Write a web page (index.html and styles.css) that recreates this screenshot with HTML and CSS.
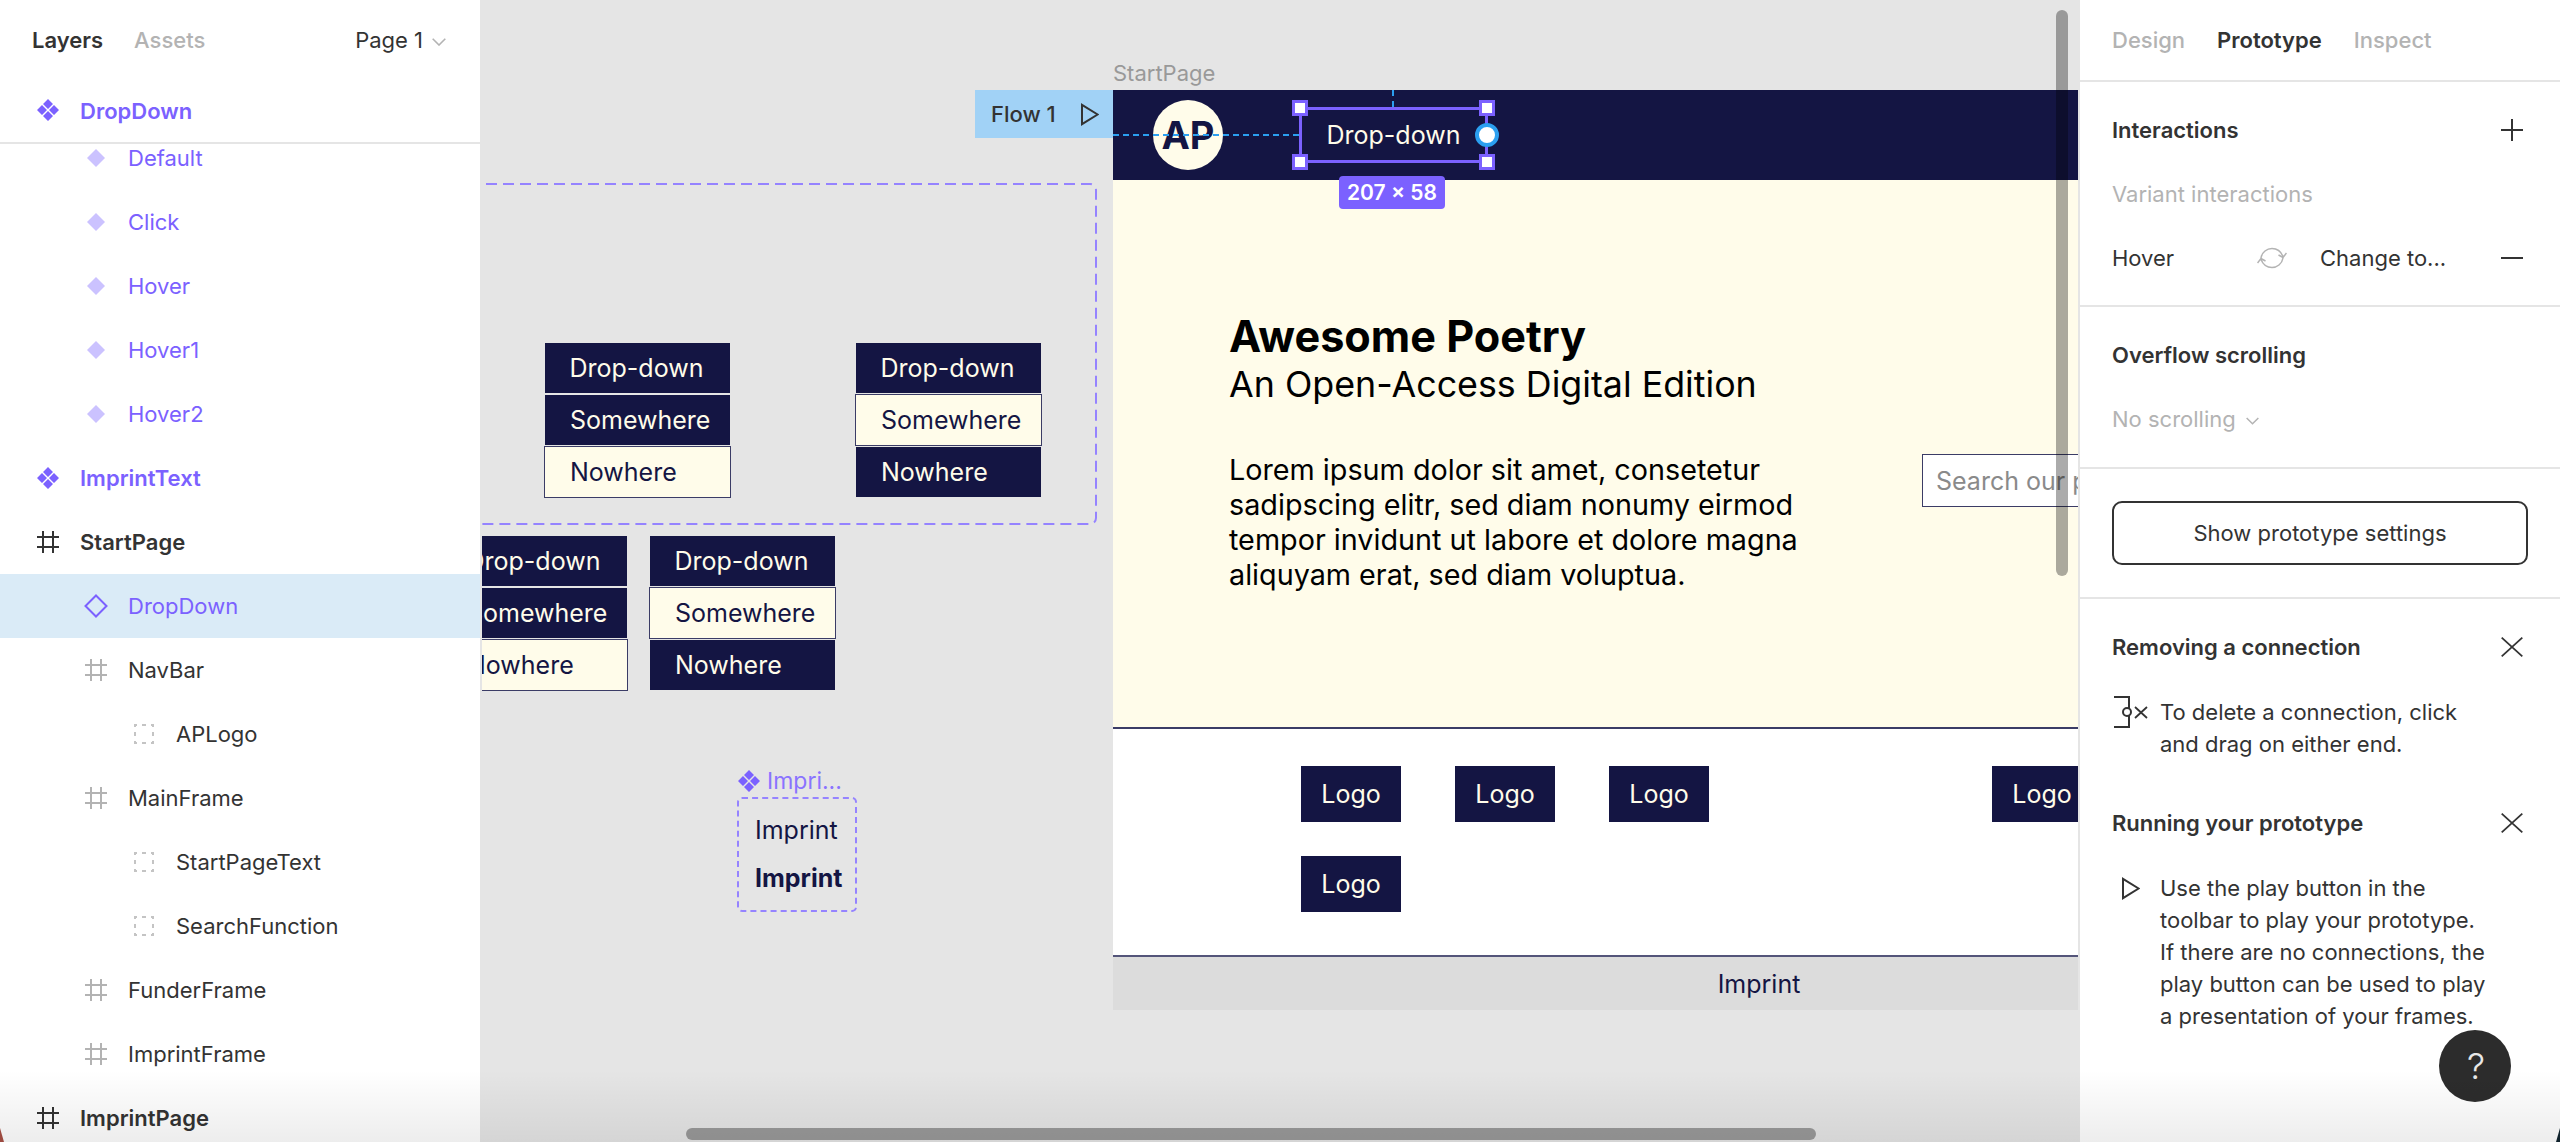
FILE: index.html
```html
<!DOCTYPE html>
<html lang="en">
<head>
<meta charset="utf-8">
<title>Prototype editor</title>
<link rel="stylesheet" href="styles.css">
</head>
<body>
<svg class="defs" width="0" height="0" aria-hidden="true">
  <defs>
    <symbol id="component" viewBox="0 0 22 22"><path d="M11 0l5 5-5 5-5-5zM5 6l5 5-5 5-5-5zM17 6l5 5-5 5-5-5zM11 12l5 5-5 5-5-5z" fill="currentColor"/></symbol>
    <symbol id="variant" viewBox="0 0 18 18"><path d="M9 0l9 9-9 9-9-9z" fill="currentColor"/></symbol>
    <symbol id="instance" viewBox="0 0 24 24"><path d="M12 1.500L22.500 12 12 22.500 1.500 12z" fill="none" stroke="currentColor" stroke-width="2"/></symbol>
    <symbol id="frame" viewBox="0 0 22 22"><path d="M6 0v22M16 0v22M0 6h22M0 16h22" fill="none" stroke="currentColor" stroke-width="2"/></symbol>
    <symbol id="group" viewBox="0 0 20 20"><path d="M0 1h3M8 1h4M17 1h3M0 19h3M8 19h4M17 19h3M1 0v3M1 8v4M1 17v3M19 0v3M19 8v4M19 17v3" fill="none" stroke="currentColor" stroke-width="2"/></symbol>
    <symbol id="chevron" viewBox="0 0 14 8"><path d="M.7.7L7 7l6.300-6.300" fill="none" stroke="currentColor" stroke-width="1.600"/></symbol>
    <symbol id="close" viewBox="0 0 22 20"><path d="M.7.7l20.600 18.600M21.300.7L.7 19.300" fill="none" stroke="currentColor" stroke-width="1.800"/></symbol>
    <symbol id="play" viewBox="0 0 18 23"><path d="M1 1.800L16.600 11.500 1 21.200z" fill="none" stroke="currentColor" stroke-width="2"/></symbol>
  </defs>
</svg>

<div class="app">
  <aside class="layers">
    <div class="tabs">
      <span class="tab tab-on">Layers</span>
      <span class="tab tab-off">Assets</span>
      <span class="page">Page 1<svg class="chev"><use href="#chevron"/></svg></span>
    </div>
    <div class="row pinned lv0 comp"><svg class="ic ic22"><use href="#component"/></svg><span>DropDown</span></div>
    <div class="row lv1 var"><svg class="ic ic18"><use href="#variant"/></svg><span>Default</span></div>
    <div class="row lv1 var"><svg class="ic ic18"><use href="#variant"/></svg><span>Click</span></div>
    <div class="row lv1 var"><svg class="ic ic18"><use href="#variant"/></svg><span>Hover</span></div>
    <div class="row lv1 var"><svg class="ic ic18"><use href="#variant"/></svg><span>Hover1</span></div>
    <div class="row lv1 var"><svg class="ic ic18"><use href="#variant"/></svg><span>Hover2</span></div>
    <div class="row lv0 comp"><svg class="ic ic22"><use href="#component"/></svg><span>ImprintText</span></div>
    <div class="row lv0 strong"><svg class="ic ic22"><use href="#frame"/></svg><span>StartPage</span></div>
    <div class="row lv1 inst"><svg class="ic ic24"><use href="#instance"/></svg><span>DropDown</span></div>
    <div class="row lv1 frm"><svg class="ic ic22"><use href="#frame"/></svg><span>NavBar</span></div>
    <div class="row lv2 grp"><svg class="ic ic20"><use href="#group"/></svg><span>APLogo</span></div>
    <div class="row lv1 frm"><svg class="ic ic22"><use href="#frame"/></svg><span>MainFrame</span></div>
    <div class="row lv2 grp"><svg class="ic ic20"><use href="#group"/></svg><span>StartPageText</span></div>
    <div class="row lv2 grp"><svg class="ic ic20"><use href="#group"/></svg><span>SearchFunction</span></div>
    <div class="row lv1 frm"><svg class="ic ic22"><use href="#frame"/></svg><span>FunderFrame</span></div>
    <div class="row lv1 frm"><svg class="ic ic22"><use href="#frame"/></svg><span>ImprintFrame</span></div>
    <div class="row lv0 strong"><svg class="ic ic22"><use href="#frame"/></svg><span>ImprintPage</span></div>
  </aside>

  <main class="canvas">
    <svg class="set-outline" width="720" height="345"><rect x="1" y="1" width="718" height="340" rx="6" fill="none" stroke="#9583ff" stroke-width="2" stroke-dasharray="11 6"/></svg>

    <div class="dd dd-a">
      <div class="dd-item dd-head">Drop-down</div>
      <div class="dd-item">Somewhere</div>
      <div class="dd-item dd-lit">Nowhere</div>
    </div>
    <div class="dd dd-b">
      <div class="dd-item dd-head">Drop-down</div>
      <div class="dd-item dd-lit">Somewhere</div>
      <div class="dd-item">Nowhere</div>
    </div>
    <div class="dd dd-c">
      <div class="dd-item dd-head">Drop-down</div>
      <div class="dd-item">Somewhere</div>
      <div class="dd-item dd-lit">Nowhere</div>
    </div>
    <div class="dd dd-d">
      <div class="dd-item dd-head">Drop-down</div>
      <div class="dd-item dd-lit">Somewhere</div>
      <div class="dd-item">Nowhere</div>
    </div>

    <div class="imprint-label"><svg class="ic-lab"><use href="#component"/></svg><span>Impri...</span></div>
    <div class="imprint-set">
      <div class="imprint-reg">Imprint</div>
      <div class="imprint-bold">Imprint</div>
    </div>

    <div class="frame-label">StartPage</div>
    <div class="flow"><span>Flow 1</span><svg class="flow-play"><use href="#play"/></svg></div>

    <div class="frame">
      <header class="nav">
        <div class="logo">AP</div>
        <div class="nav-drop">
          Drop-down
          <i class="sel"></i>
          <i class="handle h-tl"></i><i class="handle h-tr"></i><i class="handle h-bl"></i><i class="handle h-br"></i>
          <i class="node"></i>
          <i class="size">207 × 58</i>
        </div>
        <i class="conn-h"></i>
        <i class="conn-v"></i>
      </header>
      <section class="hero">
        <div class="hero-text">
          <h1>Awesome Poetry</h1>
          <h2>An Open-Access Digital Edition</h2>
          <p>Lorem ipsum dolor sit amet, consetetur sadipscing elitr, sed diam nonumy eirmod tempor invidunt ut labore et dolore magna aliquyam erat, sed diam voluptua.</p>
        </div>
        <div class="search">Search our poetry</div>
      </section>
      <section class="funders">
        <div class="logo-row">
          <div class="fund">Logo</div>
          <div class="fund">Logo</div>
          <div class="fund">Logo</div>
          <div class="fund fund-far">Logo</div>
        </div>
        <div class="logo-row">
          <div class="fund">Logo</div>
        </div>
      </section>
      <footer class="foot">Imprint</footer>
    </div>

    <i class="sb-v"></i>
    <i class="sb-h"></i>
  </main>

  <aside class="props">
    <div class="tabs tabs-r">
      <span class="tab tab-off">Design</span>
      <span class="tab tab-on">Prototype</span>
      <span class="tab tab-off">Inspect</span>
    </div>
    <section class="sec sec-int">
      <div class="title-row"><span class="title">Interactions</span>
        <svg class="pm" viewBox="0 0 22 22"><path d="M11 0v22M0 11h22" fill="none" stroke="currentColor" stroke-width="2"/></svg></div>
      <div class="line muted">Variant interactions</div>
      <div class="line hover-row">
        <span class="hv">Hover</span>
        <svg class="sync" viewBox="0 0 30 22"><path d="M4 11C5 5 10 1.500 15 1.500c5 0 9 3 11 8M29.500 6l-3.500 4.500L21.500 8M26 11c-1 6-6 9.500-11 9.500-5 0-9-3-11-8M.5 16l3.500-4.500L8.500 14" fill="none" stroke="currentColor" stroke-width="1.500"/></svg>
        <span class="ch">Change to...</span>
        <svg class="pm" viewBox="0 0 22 22"><path d="M0 11h22" fill="none" stroke="currentColor" stroke-width="2"/></svg>
      </div>
    </section>
    <section class="sec sec-ovf">
      <div class="title-row"><span class="title">Overflow scrolling</span></div>
      <div class="line muted">No scrolling<svg class="chev chev-s"><use href="#chevron"/></svg></div>
    </section>
    <section class="sec sec-btn">
      <div class="btn">Show prototype settings</div>
    </section>
    <section class="tips">
      <div class="title-row"><span class="title">Removing a connection</span><svg class="x"><use href="#close"/></svg></div>
      <div class="tip">
        <svg class="tip-ic conn" viewBox="0 0 34 32"><path d="M0 1h15v30H0" fill="none" stroke="currentColor" stroke-width="2"/><circle cx="13" cy="16" r="4" fill="#fff" stroke="currentColor" stroke-width="2"/><path d="M21 11l12 11M33 11L21 22" fill="none" stroke="currentColor" stroke-width="1.800"/></svg>
        <p>To delete a connection, click and drag on either end.</p>
      </div>
      <div class="title-row tip-next"><span class="title">Running your prototype</span><svg class="x"><use href="#close"/></svg></div>
      <div class="tip">
        <svg class="tip-ic tip-play"><use href="#play"/></svg>
        <p>Use the play button in the toolbar to play your prototype. If there are no connections, the play button can be used to play a presentation of your frames.</p>
      </div>
    </section>
    <div class="help">?</div>
  </aside>
  <div class="fade"></div>
  <i class="corner corner-l"></i>
  <i class="corner corner-r"></i>
</div>
</body>
</html>
```

FILE: styles.css
```css
* { box-sizing: border-box; }
html, body { margin: 0; height: 100%; }
body { font-family: Inter, "Liberation Sans", sans-serif; font-size: 22px; color: #333; background: #e5e5e5; overflow: hidden; }
i { font-style: normal; display: block; }
.defs { position: absolute; }

.app { position: relative; display: flex; width: 2560px; height: 1142px; overflow: hidden; }

/* left panel */
.layers { width: 482px; flex: none; background: #fff; border-right: 2px solid #e5e5e5; overflow: hidden; }
.tabs { display: flex; align-items: center; height: 80px; padding: 0 32px; gap: 31px; }
.tab { font-weight: 600; }
.tab-on { color: #333; }
.tab-off { color: #b3b3b3; font-weight: 500; }
.page { margin-left: auto; display: flex; align-items: center; gap: 9px; padding-right: 2px; color: #333; }
.chev { width: 14px; height: 8px; color: #b3b3b3; margin-top: 3px; }

.row { display: flex; align-items: center; height: 64px; position: relative; }
.row .ic { position: absolute; top: 50%; transform: translate(-50%, -50%); }
.ic22 { width: 22px; height: 22px; }
.ic18 { width: 18px; height: 18px; }
.ic24 { width: 24px; height: 24px; }
.ic20 { width: 20px; height: 20px; }
.lv0 { padding-left: 80px; }
.lv0 .ic { left: 48px; }
.lv1 { padding-left: 128px; }
.lv1 .ic { left: 96px; }
.lv2 { padding-left: 176px; }
.lv2 .ic { left: 144px; }
.pinned { z-index: 2; background: #fff; border-bottom: 2px solid #e5e5e5; margin-bottom: -18px; }
.pinned span { margin-top: -1px; }
.pinned .ic { margin-top: -1px; }
.comp { color: #7b61ff; font-weight: 600; }
.var { color: #7b61ff; }
.var .ic { color: #cbc2ff; }
.strong { color: #333; font-weight: 600; }
.strong .ic { color: #333; }
.inst { color: #7b61ff; background: #daebf7; }
.frm .ic { color: #b3b3b3; }
.grp .ic { color: #c4c4c4; }

/* canvas */
.canvas { position: relative; flex: 1; min-width: 0; height: 100%; overflow: hidden; background: #e5e5e5; }
.set-outline { position: absolute; left: -105px; top: 183px; }
.dd { position: absolute; width: 185px; display: flex; flex-direction: column; gap: 2px; font-size: 25px; }
.dd-a { left: 63px; top: 343px; }
.dd-b { left: 374px; top: 343px; }
.dd-c { left: -40px; top: 536px; }
.dd-d { left: 168px; top: 536px; }
.dd-item { height: 50px; display: flex; align-items: center; padding-left: 25px; background: #141543; color: #fffcea; }
.dd-head { justify-content: center; padding: 0 2px 0 0; }
.dd-lit { background: #fffcea; color: #141543; outline: 1.500px solid #3b3c66; }

.imprint-label { position: absolute; left: 256px; top: 767px; display: flex; align-items: center; gap: 7px; color: #8a73ff; font-size: 23px; }
.ic-lab { width: 22px; height: 22px; color: #7b61ff; }
.imprint-set { position: absolute; left: 255px; top: 797px; width: 120px; height: 115px; border: 2px dashed #9583ff; border-radius: 5px; padding: 9px 0 0 16px; font-size: 25px; color: #141543; }
.imprint-reg { height: 48px; line-height: 44px; }
.imprint-bold { line-height: 44px; font-weight: 700; }

.frame-label { position: absolute; left: 631px; top: 60px; color: #999; font-size: 22px; }
.flow { position: absolute; left: 493px; top: 90px; width: 138px; height: 48px; background: #a1d2f6; display: flex; align-items: center; padding-left: 16px; font-weight: 500; color: #333; }
.flow-play { width: 18px; height: 23px; margin-left: 25px; color: #333; }

.frame { position: absolute; left: 631px; top: 90px; width: 1292px; display: flex; flex-direction: column; }
.nav { position: relative; height: 90px; background: #141543; display: flex; align-items: center; padding-left: 40px; }
.logo { width: 70px; height: 70px; border-radius: 50%; background: #fffcea; color: #141543; font-weight: 700; font-size: 38px; display: flex; align-items: center; justify-content: center; }
.nav-drop { position: relative; margin-left: 77px; width: 187px; height: 54px; display: flex; align-items: center; justify-content: center; color: #fffcea; font-size: 25px; }
.sel { position: absolute; inset: -1px; border: 3px solid #7b61ff; }
.handle { position: absolute; width: 16px; height: 16px; background: #fff; border: 3px solid #7b61ff; }
.h-tl { left: -8px; top: -8px; }
.h-tr { right: -8px; top: -8px; }
.h-bl { left: -8px; bottom: -8px; }
.h-br { right: -8px; bottom: -8px; }
.node { position: absolute; right: -12px; top: 15px; width: 24px; height: 24px; border-radius: 50%; background: #fff; border: 4px solid #2b9ff0; }
.size { position: absolute; left: 39px; top: 68px; width: 106px; height: 33px; border-radius: 4px; background: #7b61ff; color: #fff; font-size: 21px; font-weight: 600; display: flex; align-items: center; justify-content: center; white-space: nowrap; z-index: 3; }
.conn-h { position: absolute; left: 0; top: 44px; width: 186px; border-top: 2px dashed #2b9ff0; }
.conn-v { position: absolute; left: 279px; top: 0; height: 17px; border-left: 2px dashed #2b9ff0; }

.hero { height: 547px; background: #fffcea; display: flex; padding: 126px 0 0 116px; color: #000; }
.hero-text { width: 693px; flex: none; }
.hero h1 { margin: 0; font-size: 43.200px; font-weight: 700; line-height: 60px; }
.hero h2 { margin: 0; font-size: 35.800px; font-weight: 400; line-height: 36px; }
.hero p { margin: 50px 0 0; width: 600px; font-size: 28.750px; line-height: 35px; }
.search { margin-top: 148px; width: 300px; height: 53px; background: #fff; border: 1.500px solid #3b3c66; display: flex; align-items: center; padding-left: 13px; font-size: 25px; color: #8a8a8a; white-space: nowrap; }

.funders { height: 228px; background: #fff; border-top: 2px solid #3b3c66; padding: 37px 0 0 188px; display: flex; flex-direction: column; gap: 34px; }
.logo-row { display: flex; gap: 54px; }
.fund { width: 100px; height: 56px; background: #141543; color: #fffcea; font-size: 25px; display: flex; align-items: center; justify-content: center; }
.fund-far { margin-left: 229px; }
.foot { height: 55px; background: #dcdcdc; border-top: 2px solid #54557a; color: #141543; font-size: 25px; display: flex; align-items: center; justify-content: center; }

.sb-v { position: absolute; left: 1574px; top: 10px; width: 12px; height: 566px; border-radius: 6px; background: rgba(0,0,0,.33); }
.sb-h { position: absolute; left: 204px; top: 1128px; width: 1130px; height: 12px; border-radius: 6px; background: rgba(0,0,0,.33); }

/* right panel */
.props { position: relative; width: 482px; flex: none; background: #fff; border-left: 2px solid #e5e5e5; overflow: hidden; }
.tabs-r { height: 82px; padding-left: 32px; gap: 32px; border-bottom: 2px solid #e5e5e5; }
.sec { padding: 0 30px 0 32px; border-bottom: 2px solid #e5e5e5; }
.title-row { display: flex; align-items: center; justify-content: space-between; height: 32px; }
.title { font-weight: 600; color: #333; }
.pm { width: 22px; height: 22px; color: #333; margin-right: 7px; flex: none; }
.line { height: 32px; margin-top: 32px; display: flex; align-items: center; }
.muted { color: #b3b3b3; }
.sec-int { height: 225px; padding-top: 32px; }
.sec-ovf { height: 162px; padding-top: 32px; }
.sec-btn { height: 130px; padding-top: 32px; }
.hover-row { color: #333; }
.hv { width: 145px; }
.sync { width: 30px; height: 22px; color: #b3b3b3; flex: none; }
.ch { margin-left: 33px; margin-right: auto; }
.chev-s { margin-left: 10px; width: 13px; }
.btn { width: 416px; height: 64px; border: 2px solid #333; border-radius: 10px; display: flex; align-items: center; justify-content: center; color: #333; }
.tips { padding: 32px 30px 0 32px; }
.x { width: 22px; height: 20px; color: #333; margin-right: 7px; flex: none; }
.tip { position: relative; padding-left: 48px; margin-top: 33px; }
.tip p { margin: 0; line-height: 32px; color: #333; width: 330px; }
.tip-next { margin-top: 47px; }
.tip-ic { position: absolute; color: #333; }
.conn { left: 2px; top: 0; width: 34px; height: 32px; }
.tip-play { left: 10px; top: 5px; width: 18px; height: 23px; }
.help { position: absolute; left: 359px; top: 1030px; width: 72px; height: 72px; border-radius: 50%; background: #2c2c2c; color: #e8e8e8; font-size: 36px; font-weight: 300; display: flex; align-items: center; justify-content: center; padding-left: 2px; }

.fade { position: absolute; left: 0; right: 0; bottom: 0; height: 72px; background: linear-gradient(rgba(0,0,0,0), rgba(0,0,0,.07)); pointer-events: none; }
.corner { position: absolute; bottom: 0; width: 4px; height: 14px; }
.corner-l { left: 0; background: #9c4a40; clip-path: polygon(0 100%, 100% 100%, 0 0); }
.corner-r { right: 0; background: #10222c; clip-path: polygon(100% 0, 100% 100%, 0 100%); }
```
